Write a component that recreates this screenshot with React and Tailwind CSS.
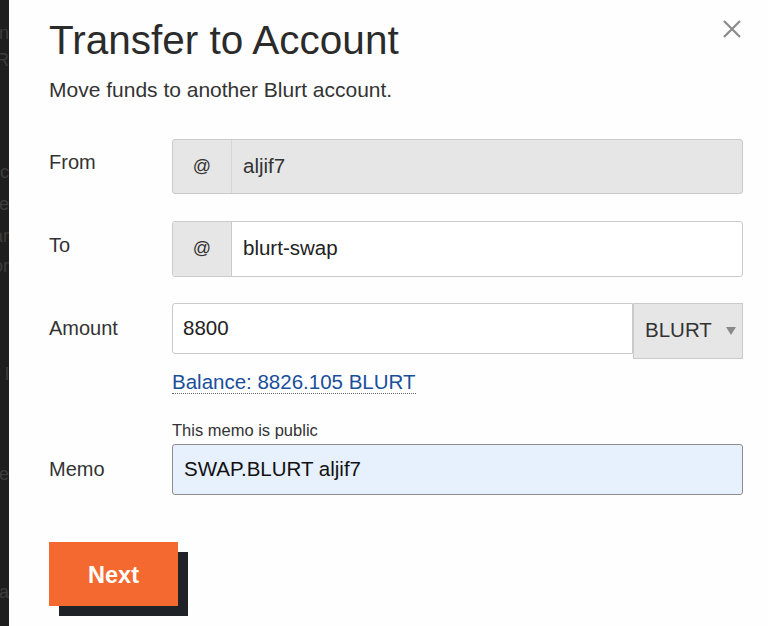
import React from "react";

const font = { fontFamily: '"Liberation Sans", Arial, sans-serif' };

function Backdrop() {
  const frags = [
    { t: "n", mt: "mt-[22px]" },
    { t: "R", mt: "mt-[5px]" },
    { t: "rc", mt: "mt-[90px]" },
    { t: "le", mt: "mt-[10px]" },
    { t: "ar", mt: "mt-[10px]" },
    { t: "or", mt: "mt-[8px]" },
    { t: "l", mt: "mt-[86px]" },
    { t: "e", mt: "mt-[78px]" },
    { t: "na", mt: "mt-[96px]" },
  ];
  return (
    <div className="w-[9px] h-full bg-[#1e1e1e] overflow-hidden flex flex-col items-end shrink-0" aria-hidden="true">
      {frags.map((f, i) => (
        <div key={i} className={`${f.mt} text-[18px] leading-[22px] text-[#3c3c3c] whitespace-nowrap`}>
          {f.t}
        </div>
      ))}
    </div>
  );
}

function Row({ label, children, className = "", labelClass = "" }) {
  return (
    <div className={`flex items-center ${className}`}>
      <div className={`w-[123px] shrink-0 text-[20px] text-[#333] ${labelClass}`}>{label}</div>
      <div className="flex-1">{children}</div>
    </div>
  );
}

export default function App() {
  return (
    <div className="w-[768px] h-[626px] flex bg-[#1e1e1e] overflow-hidden" style={font}>
      <div className="w-[9px] h-full shrink-0">
        <Backdrop />
      </div>
      <div className="flex-1 h-[640px] bg-[#fefefe] rounded-bl-[14px] relative">
        <button className="absolute right-[26px] top-[19px] text-[#8a8a8a]" aria-label="close">
          <svg width="20" height="20" viewBox="0 0 20 20" fill="none" stroke="currentColor" strokeWidth="2.2">
            <path d="M2 2 L18 18 M18 2 L2 18" />
          </svg>
        </button>
        <div className="pl-[40px] pr-[25px]">
          <h1 className="text-[40.5px] leading-none text-[#2b2b2b] pt-[20px]">Transfer to Account</h1>
          <p className="text-[21px] text-[#333] mt-[18px] leading-none">Move funds to another Blurt account.</p>

          <div className="mt-[39px] flex flex-col">
            <Row label="From" labelClass="-mt-[8px]">
              <div className="flex h-[55px] border border-[#cacaca] rounded-[3px] bg-[#e6e6e6] overflow-hidden">
                <div className="w-[59px] flex items-center justify-center border-r border-[#d6d6d6] text-[18px] text-[#333]">@</div>
                <div className="flex-1 flex items-center pl-[11px] text-[20.5px] text-[#333]">aljif7</div>
              </div>
            </Row>
            <Row label="To" className="mt-[27px]" labelClass="-mt-[8px]">
              <div className="flex h-[56px] border border-[#cacaca] rounded-[3px] bg-white overflow-hidden">
                <div className="w-[59px] flex items-center justify-center border-r border-[#cacaca] bg-[#e6e6e6] text-[18px] text-[#333]">@</div>
                <div className="flex-1 flex items-center pl-[11px] text-[20.5px] text-[#222]">blurt-swap</div>
              </div>
            </Row>
            <div className="flex mt-[26px]">
              <div className="w-[123px] shrink-0 text-[20px] text-[#333] pt-[10px]">Amount</div>
              <div className="flex-1 flex flex-col">
                <div className="flex items-start">
                  <div className="flex-1 h-[51px] border border-[#cacaca] rounded-l-[3px] bg-white flex items-center pl-[10px] text-[20.5px] text-[#222]">8800</div>
                  <div className="w-[110px] h-[56px] border border-[#cacaca] bg-[#e6e6e6] flex items-center pl-[11px] gap-[14px] text-[20.5px] text-[#333]">
                    BLURT
                    <svg width="10" height="8" viewBox="0 0 10 8"><path d="M0 0 H10 L5 8 Z" fill="#8a8a8a" /></svg>
                  </div>
                </div>
                <div className="mt-[12px]">
                  <span className="text-[20.5px] text-[#1a4f9c] border-b border-dotted border-[#666] leading-[22px] inline-block">Balance: 8826.105 BLURT</span>
                </div>
                <div className="mt-[26px] text-[16.5px] text-[#333] leading-none">This memo is public</div>
              </div>
            </div>
            <Row label="Memo" labelClass="mt-[4px]">
              <div className="mt-[6px] h-[51px] border border-[#8d8d8d] rounded-[3px] bg-[#e7f0fd] flex items-center pl-[11px] text-[20.5px] text-[#111]">SWAP.BLURT aljif7</div>
            </Row>
          </div>

          <div className="mt-[47px] relative w-[139px] h-[75px]">
            <div className="absolute left-[10px] top-[10px] w-[129px] h-[64px] bg-[#1f2226]"></div>
            <button className="absolute left-0 top-0 w-[129px] h-[64px] pt-[3px] bg-[#f4692f] text-white font-bold text-[23.5px]">Next</button>
          </div>
        </div>
      </div>
    </div>
  );
}
